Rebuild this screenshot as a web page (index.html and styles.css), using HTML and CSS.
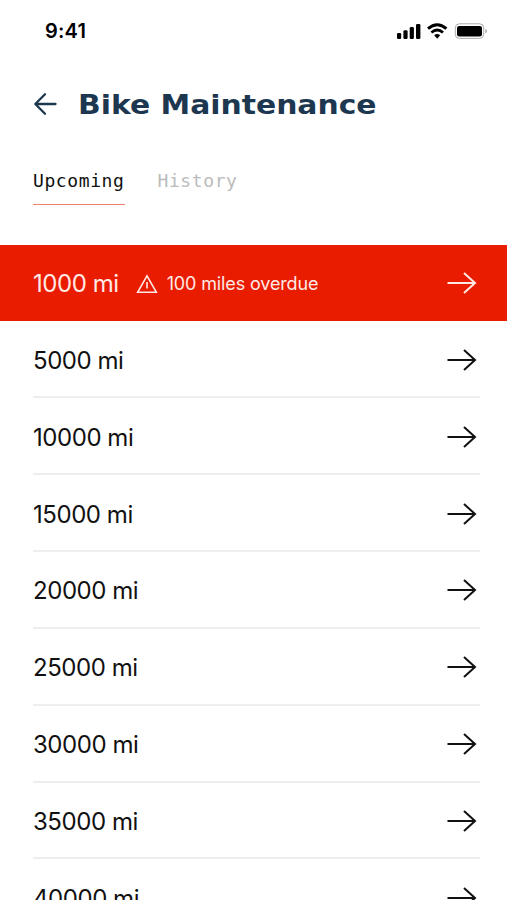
FILE: index.html
```html
<!DOCTYPE html>
<html lang="en">
<head>
<meta charset="utf-8">
<title>Bike Maintenance</title>
<link rel="stylesheet" href="styles.css">
</head>
<body>
<svg class="defs" aria-hidden="true"><symbol id="arrow" viewBox="0 0 30 24"><path d="M.5 12H28M17 2L28 12L17 22"/></symbol></svg>
<div class="status">
  <span class="time">9:41</span>
  <svg class="indicators" width="92" height="18" viewBox="0 0 92 18">
    <rect x="1" y="11" width="4.2" height="6" rx="1.3"/><rect x="7.4" y="8.3" width="4.2" height="8.7" rx="1.3"/><rect x="13.7" y="5" width="4.2" height="12" rx="1.3"/><rect x="20" y="2" width="4.4" height="15" rx="1.3"/>
    <g class="wifi"><path d="M32 6.7Q41.2-1.3 50.4 6.7"/><path d="M35.4 10.5Q41.2 5.6 47 10.5"/></g>
    <path d="M38.2 13.3Q41.2 10.9 44.2 13.3L41.2 16.8Z"/>
    <rect class="shell" x="59.3" y="1.8" width="28.4" height="14.6" rx="4"/>
    <rect x="61" y="3.9" width="25" height="10.6" rx="2.2"/>
    <path class="cap" d="M89.3 6.8Q91 7.5 91 9.1T89.3 11.6Z"/>
  </svg>
</div>
<header class="header">
  <svg class="back" width="24" height="24" viewBox="0 0 24 24"><path d="M22.5 12H2.5M12 2.3L2.3 12L12 21.7"/></svg>
  <h1>Bike Maintenance</h1>
</header>
<nav class="tabs"><a class="tab active">Upcoming</a><a class="tab">History</a></nav>
<main class="list">
  <div class="row overdue"><span class="miles">1000 mi</span>
    <span class="alert"><svg width="22" height="20" viewBox="0 0 22 20"><path d="M11 1.8L20.3 18.2H1.7ZM11 8V14.5"/></svg><span>100 miles overdue</span></span>
    <svg class="arrow"><use href="#arrow"/></svg></div>
  <div class="row"><span class="miles">5000 mi</span><svg class="arrow"><use href="#arrow"/></svg></div>
  <div class="row"><span class="miles">10000 mi</span><svg class="arrow"><use href="#arrow"/></svg></div>
  <div class="row"><span class="miles">15000 mi</span><svg class="arrow"><use href="#arrow"/></svg></div>
  <div class="row"><span class="miles">20000 mi</span><svg class="arrow"><use href="#arrow"/></svg></div>
  <div class="row"><span class="miles">25000 mi</span><svg class="arrow"><use href="#arrow"/></svg></div>
  <div class="row"><span class="miles">30000 mi</span><svg class="arrow"><use href="#arrow"/></svg></div>
  <div class="row"><span class="miles">35000 mi</span><svg class="arrow"><use href="#arrow"/></svg></div>
  <div class="row"><span class="miles">40000 mi</span><svg class="arrow"><use href="#arrow"/></svg></div>
</main>
</body>
</html>
```
FILE: styles.css
```css
* { box-sizing: border-box; }
html, body { height: 900px; overflow: hidden; }
body { margin: 0; background: #fff; color: #111; font-family: Inter, "Liberation Sans", sans-serif; }
.defs { display: none; }
.status { display: flex; justify-content: space-between; align-items: center; height: 62px; padding: 0 19px 0 45px; color: #000; }
.time { font-size: 20px; font-weight: 600; line-height: 24px; letter-spacing: .2px; }
.wifi { fill: none; stroke: #000; stroke-width: 2.9; }
.shell { fill: none; stroke: #aaa; stroke-width: 1; }
.cap { fill: #aaa; }
.header { display: flex; align-items: center; height: 84px; padding-left: 33px; color: #1c374f; }
.back { margin-right: 21px; fill: none; stroke: currentColor; stroke-width: 2.3; stroke-linecap: round; stroke-linejoin: round; }
h1 { margin: 0; padding-top: 2px; font: 700 26px/32px "DejaVu Sans", sans-serif; white-space: nowrap; transform: scaleX(1.146); transform-origin: left; }
.tabs { display: flex; gap: 33px; height: 98.6px; padding: 19px 0 0 33px; }
.tab { height: 40px; font: 18px/32px "DejaVu Sans Mono", monospace; letter-spacing: .6px; color: #bbb; }
.active { color: #111; border-bottom: 1px solid #f08070; }
.row { display: flex; align-items: center; height: 76.85px; margin: 0 27px 0 33px; padding-top: 2px; border-bottom: 2px solid #eee; }
.miles { padding-top: 2px; font-size: 24px; line-height: 32px; letter-spacing: -.45px; white-space: nowrap; }
.arrow { width: 30px; height: 24px; margin: 0 3px 0 auto; fill: none; stroke: currentColor; stroke-width: 2; }
.overdue { margin: 0; padding: 2px 27px 0 33px; background: #e91c00; color: #ffe9e5; border-color: #e91c00; }
.alert { display: flex; align-items: center; gap: 9px; margin-left: 17px; padding-top: 1px; font-size: 18px; letter-spacing: -.13px; white-space: nowrap; }
.alert svg { fill: none; stroke: currentColor; stroke-width: 1.6; }
```
